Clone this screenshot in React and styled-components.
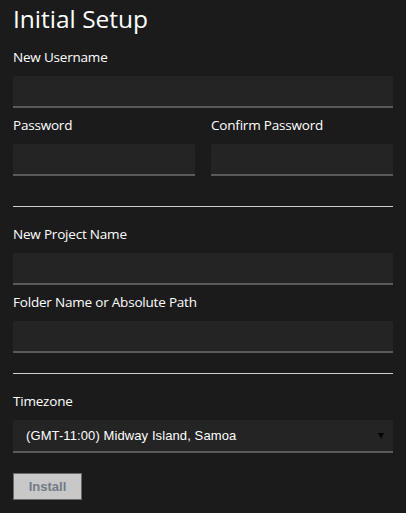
import React from 'react';
import styled, { createGlobalStyle } from 'styled-components';

const GlobalStyle = createGlobalStyle`
  html, body {
    margin: 0;
    padding: 0;
    background: #1b1b1b;
  }
  body {
    font-family: "Open Sans", "DejaVu Sans", sans-serif;
    color: #fff;
  }
`;

const Page = styled.div`
  padding: 0 13px 13px 13px;
  width: 380px;
`;

const Title = styled.h1`
  margin: 0;
  padding-top: 3px;
  font-size: 24.5px;
  font-weight: 400;
  line-height: 32px;
  height: 44px;
  letter-spacing: 0;
`;

const Field = styled.div`
  margin-bottom: ${p => p.$mb ?? 7}px;
  flex: 1;
`;

const Label = styled.label`
  display: block;
  font-size: 13.5px;
  line-height: 20px;
  margin-bottom: 9px;
  letter-spacing: -0.2px;
`;

const Input = styled.input`
  display: block;
  box-sizing: border-box;
  width: 100%;
  height: 32px;
  margin: 0;
  border: none;
  border-bottom: 2px solid #5a5a5a;
  border-radius: 2px 2px 0 0;
  background: #242424;
  color: #fff;
  padding: 0 12px;
  outline: none;
`;

const Row = styled.div`
  display: flex;
  gap: 16px;
`;

const Rule = styled.hr`
  border: none;
  border-top: 1px solid #cfcfcf;
  margin: ${p => p.$before}px 0 ${p => p.$after}px 0;
  height: 0;
`;

const SelectBox = styled.div`
  box-sizing: border-box;
  height: 33px;
  background: #242424;
  border-bottom: 2px solid #5a5a5a;
  border-radius: 2px 2px 0 0;
  display: flex;
  align-items: center;
  padding: 0 13px;
  font-family: "Liberation Sans", Arial, sans-serif;
  font-size: 13px;
  letter-spacing: 0.1px;
  color: #fff;
`;

const Arrow = styled.span`
  margin-left: auto;
  width: 0;
  height: 0;
  border-left: 3.5px solid transparent;
  border-right: 3.5px solid transparent;
  border-top: 6px solid #050505;
  margin-right: -4px;
  margin-top: 1px;
`;

const Button = styled.button`
  display: block;
  margin-top: 20px;
  width: 69px;
  height: 27px;
  background: #c8c8c8;
  border: 1px solid #6a6a6a;
  color: #737a86;
  font-family: "Liberation Sans", Arial, sans-serif;
  font-weight: 700;
  font-size: 13px;
  padding: 0;
`;

export default function App() {
  return (
    <Page>
      <GlobalStyle />
      <Title>Initial Setup</Title>
      <Field>
        <Label>New Username</Label>
        <Input type="text" />
      </Field>
      <Row>
        <Field $mb={0}>
          <Label>Password</Label>
          <Input type="password" />
        </Field>
        <Field $mb={0}>
          <Label>Confirm Password</Label>
          <Input type="password" />
        </Field>
      </Row>
      <Rule $before={30} $after={17} />
      <Field>
        <Label>New Project Name</Label>
        <Input type="text" />
      </Field>
      <Field $mb={0}>
        <Label>Folder Name or Absolute Path</Label>
        <Input type="text" />
      </Field>
      <Rule $before={20} $after={17} />
      <Field $mb={0}>
        <Label>Timezone</Label>
        <SelectBox>
          (GMT-11:00) Midway Island, Samoa
          <Arrow />
        </SelectBox>
      </Field>
      <Button disabled>Install</Button>
    </Page>
  );
}
